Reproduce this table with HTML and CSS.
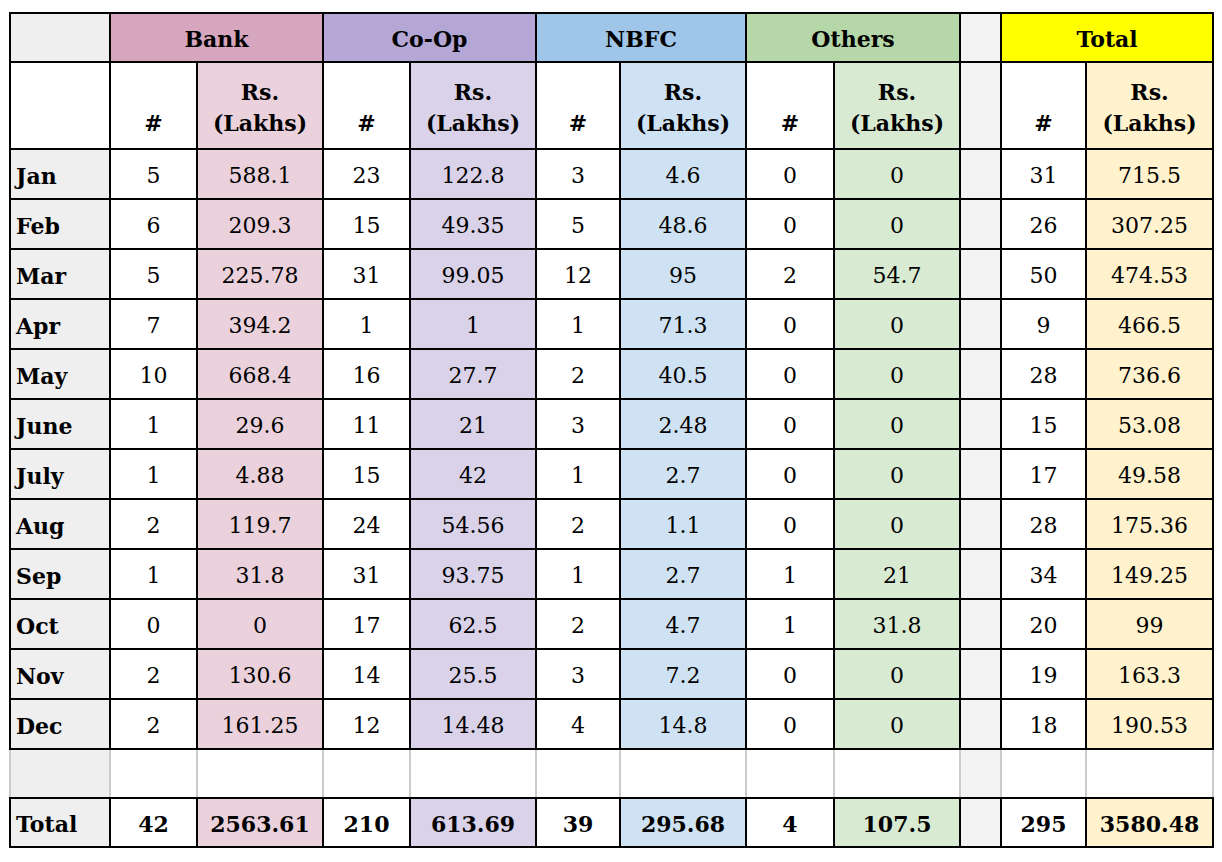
FILE: index.html
```html
<!DOCTYPE html>
<html>
<head>
<meta charset="utf-8">
<link rel="stylesheet" href="styles.css">
</head>
<body>
<table class="sheet">
  <colgroup>
    <col class="c-month">
    <col class="c-bank-n"><col class="c-rs">
    <col class="c-coop-n"><col class="c-rs">
    <col class="c-nbfc-n"><col class="c-rs">
    <col class="c-oth-n"><col class="c-rs">
    <col class="c-gap">
    <col class="c-tot-n"><col class="c-rs2">
  </colgroup>
  <tr class="head">
    <td class="m"></td>
    <td colspan="2" class="h-bank">Bank</td>
    <td colspan="2" class="h-coop">Co-Op</td>
    <td colspan="2" class="h-nbfc">NBFC</td>
    <td colspan="2" class="h-oth">Others</td>
    <td class="gap"></td>
    <td colspan="2" class="h-tot">Total</td>
  </tr>
  <tr class="sub">
    <td></td>
    <td>#</td><td class="bk">Rs.<br>(Lakhs)</td>
    <td>#</td><td class="cp">Rs.<br>(Lakhs)</td>
    <td>#</td><td class="nb">Rs.<br>(Lakhs)</td>
    <td>#</td><td class="ot">Rs.<br>(Lakhs)</td>
    <td class="gap"></td>
    <td>#</td><td class="tt">Rs.<br>(Lakhs)</td>
  </tr>
  <tr class="row"><td class="m">Jan</td><td>5</td><td class="bk">588.1</td><td>23</td><td class="cp">122.8</td><td>3</td><td class="nb">4.6</td><td>0</td><td class="ot">0</td><td class="gap"></td><td>31</td><td class="tt">715.5</td></tr>
  <tr class="row"><td class="m">Feb</td><td>6</td><td class="bk">209.3</td><td>15</td><td class="cp">49.35</td><td>5</td><td class="nb">48.6</td><td>0</td><td class="ot">0</td><td class="gap"></td><td>26</td><td class="tt">307.25</td></tr>
  <tr class="row"><td class="m">Mar</td><td>5</td><td class="bk">225.78</td><td>31</td><td class="cp">99.05</td><td>12</td><td class="nb">95</td><td>2</td><td class="ot">54.7</td><td class="gap"></td><td>50</td><td class="tt">474.53</td></tr>
  <tr class="row"><td class="m">Apr</td><td>7</td><td class="bk">394.2</td><td>1</td><td class="cp">1</td><td>1</td><td class="nb">71.3</td><td>0</td><td class="ot">0</td><td class="gap"></td><td>9</td><td class="tt">466.5</td></tr>
  <tr class="row"><td class="m">May</td><td>10</td><td class="bk">668.4</td><td>16</td><td class="cp">27.7</td><td>2</td><td class="nb">40.5</td><td>0</td><td class="ot">0</td><td class="gap"></td><td>28</td><td class="tt">736.6</td></tr>
  <tr class="row"><td class="m">June</td><td>1</td><td class="bk">29.6</td><td>11</td><td class="cp">21</td><td>3</td><td class="nb">2.48</td><td>0</td><td class="ot">0</td><td class="gap"></td><td>15</td><td class="tt">53.08</td></tr>
  <tr class="row"><td class="m">July</td><td>1</td><td class="bk">4.88</td><td>15</td><td class="cp">42</td><td>1</td><td class="nb">2.7</td><td>0</td><td class="ot">0</td><td class="gap"></td><td>17</td><td class="tt">49.58</td></tr>
  <tr class="row"><td class="m">Aug</td><td>2</td><td class="bk">119.7</td><td>24</td><td class="cp">54.56</td><td>2</td><td class="nb">1.1</td><td>0</td><td class="ot">0</td><td class="gap"></td><td>28</td><td class="tt">175.36</td></tr>
  <tr class="row"><td class="m">Sep</td><td>1</td><td class="bk">31.8</td><td>31</td><td class="cp">93.75</td><td>1</td><td class="nb">2.7</td><td>1</td><td class="ot">21</td><td class="gap"></td><td>34</td><td class="tt">149.25</td></tr>
  <tr class="row"><td class="m">Oct</td><td>0</td><td class="bk">0</td><td>17</td><td class="cp">62.5</td><td>2</td><td class="nb">4.7</td><td>1</td><td class="ot">31.8</td><td class="gap"></td><td>20</td><td class="tt">99</td></tr>
  <tr class="row"><td class="m">Nov</td><td>2</td><td class="bk">130.6</td><td>14</td><td class="cp">25.5</td><td>3</td><td class="nb">7.2</td><td>0</td><td class="ot">0</td><td class="gap"></td><td>19</td><td class="tt">163.3</td></tr>
  <tr class="row"><td class="m">Dec</td><td>2</td><td class="bk">161.25</td><td>12</td><td class="cp">14.48</td><td>4</td><td class="nb">14.8</td><td>0</td><td class="ot">0</td><td class="gap"></td><td>18</td><td class="tt">190.53</td></tr>
  <tr class="blank"><td class="m"></td><td></td><td></td><td></td><td></td><td></td><td></td><td></td><td></td><td class="gap"></td><td></td><td></td></tr>
  <tr class="total"><td class="m">Total</td><td>42</td><td class="bk">2563.61</td><td>210</td><td class="cp">613.69</td><td>39</td><td class="nb">295.68</td><td>4</td><td class="ot">107.5</td><td class="gap"></td><td>295</td><td class="tt">3580.48</td></tr>
</table>
</body>
</html>
```

FILE: styles.css
```css
html, body {
  margin: 0;
  padding: 0;
  background: #ffffff;
}

body {
  font-family: "DejaVu Serif", "Liberation Serif", serif;
  color: #000000;
}

.sheet {
  border-collapse: collapse;
  table-layout: fixed;
  width: 1204px;
  margin: 12px 0 0 9px;
}

.c-month { width: 100px; }
.c-bank-n { width: 87px; }
.c-coop-n { width: 87px; }
.c-nbfc-n { width: 84px; }
.c-oth-n { width: 88px; }
.c-tot-n { width: 85px; }
.c-rs { width: 126px; }
.c-rs2 { width: 127px; }
.c-gap { width: 41px; }

.sheet td {
  border: 2px solid #000000;
  padding: 0;
  text-align: center;
  font-size: 22px;
  line-height: 28px;
  vertical-align: middle;
  white-space: nowrap;
  overflow: hidden;
}

.head td {
  height: 45px;
  font-weight: bold;
  padding-top: 2px;
}

.sub td {
  height: 76px;
  font-weight: bold;
  vertical-align: bottom;
  line-height: 31px;
  padding-bottom: 9px;
}

.row td {
  height: 44px;
  padding-top: 4px;
}

.blank td {
  height: 47px;
  border-left-color: #cccccc;
  border-right-color: #cccccc;
}

.total td {
  height: 45px;
  padding-top: 2px;
  font-weight: bold;
}

.sheet td.m {
  background: #efefef;
  text-align: left;
  padding-left: 5px;
  font-weight: bold;
}

.sheet td.gap { background: #f3f3f3; }

.h-bank { background: #d5a6bd; }
.h-coop { background: #b4a7d6; }
.h-nbfc { background: #9fc5e8; }
.h-oth { background: #b6d7a8; }
.h-tot { background: #ffff00; }

.bk { background: #ead1dc; }
.cp { background: #d9d2e9; }
.nb { background: #cfe2f3; }
.ot { background: #d9ead3; }
.tt { background: #fff2cc; }

.blank td.bk, .blank td.cp, .blank td.nb, .blank td.ot, .blank td.tt { background: #ffffff; }
```
